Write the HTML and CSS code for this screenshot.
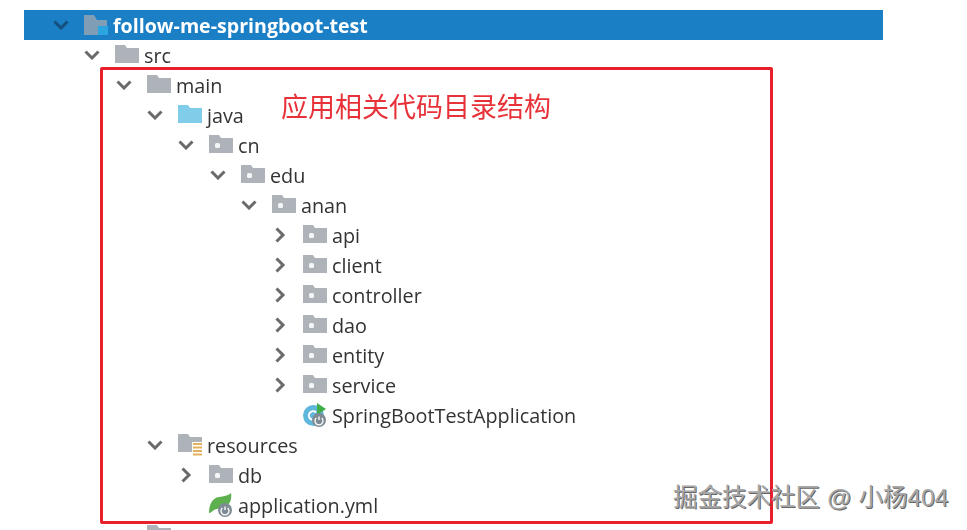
FILE: index.html
```html
<!DOCTYPE html>
<html lang="en">
<head>
    <meta charset="UTF-8">
    <meta name="viewport" content="width=device-width, initial-scale=1.0">
    <title>follow-me-springboot-test</title>
    <link rel="stylesheet" href="styles.css">
</head>
<body>
    <svg class="defs" width="0" height="0">
        <symbol id="down" viewBox="0 0 16 10"><path d="M1.5 1.5 8 8l6.5-6.5" fill="none" stroke-width="3"/></symbol>
        <symbol id="right" viewBox="0 0 12 16"><path d="M2.5 1.5 9 8l-6.5 6.5" fill="none" stroke-width="3"/></symbol>
        <symbol id="folder" viewBox="0 0 24 18"><path d="M0 0h10l2 3h12v15H0z"/></symbol>
        <symbol id="package" viewBox="0 0 24 18"><path d="M0 0h10l2 3h12v15H0z"/><rect x="6" y="8" width="5" height="5" rx="1.5" fill="#f4f5f6"/></symbol>
    </svg>

    <div class="tree">
        <div class="row root">
            <svg class="arrow down"><use href="#down"/></svg>
            <svg class="icon root-icon" viewBox="0 0 24 20"><path d="M0 0h10l3 5h10v15H0z"/><rect x="14" y="11" width="10" height="9" fill="#2aa5e0"/></svg>
            <span>follow-me-springboot-test</span>
        </div>
        <div class="row l1"><svg class="arrow down"><use href="#down"/></svg><svg class="icon"><use href="#folder"/></svg><span>src</span></div>
        <div class="row l2"><svg class="arrow down"><use href="#down"/></svg><svg class="icon"><use href="#folder"/></svg><span>main</span></div>
        <div class="row l3"><svg class="arrow down"><use href="#down"/></svg><svg class="icon java"><use href="#folder"/></svg><span>java</span></div>
        <div class="row l4"><svg class="arrow down"><use href="#down"/></svg><svg class="icon"><use href="#package"/></svg><span>cn</span></div>
        <div class="row l5"><svg class="arrow down"><use href="#down"/></svg><svg class="icon"><use href="#package"/></svg><span>edu</span></div>
        <div class="row l6"><svg class="arrow down"><use href="#down"/></svg><svg class="icon"><use href="#package"/></svg><span>anan</span></div>
        <div class="row l7"><svg class="arrow right"><use href="#right"/></svg><svg class="icon"><use href="#package"/></svg><span>api</span></div>
        <div class="row l7"><svg class="arrow right"><use href="#right"/></svg><svg class="icon"><use href="#package"/></svg><span>client</span></div>
        <div class="row l7"><svg class="arrow right"><use href="#right"/></svg><svg class="icon"><use href="#package"/></svg><span>controller</span></div>
        <div class="row l7"><svg class="arrow right"><use href="#right"/></svg><svg class="icon"><use href="#package"/></svg><span>dao</span></div>
        <div class="row l7"><svg class="arrow right"><use href="#right"/></svg><svg class="icon"><use href="#package"/></svg><span>entity</span></div>
        <div class="row l7"><svg class="arrow right"><use href="#right"/></svg><svg class="icon"><use href="#package"/></svg><span>service</span></div>
        <div class="row l7">
            <span class="arrow"></span>
            <svg class="icon app" viewBox="0 0 24 24">
                <circle cx="10.5" cy="12.5" r="10.5" fill="#5fb7dc"/>
                <path d="M13 9.5a4.2 4.2 0 1 0 0 6" fill="none" stroke="#fff" stroke-width="2"/>
                <path d="M14 0l9 6-9 6z" fill="#3fae49"/>
                <circle cx="16" cy="17" r="7" fill="#7f8b94"/>
                <path d="M16 13.5v3.5M13.3 15a4 4 0 1 0 5.4 0" fill="none" stroke="#fff" stroke-width="1.3"/>
            </svg>
            <span>SpringBootTestApplication</span>
        </div>
        <div class="row l3">
            <svg class="arrow down"><use href="#down"/></svg>
            <svg class="icon res" viewBox="0 0 24 22">
                <path d="M0 0h10l2 3h12v15H0z" fill="#aeb3ba"/>
                <rect x="14" y="8" width="10" height="14" fill="#fff"/>
                <path d="M15 10h9M15 13.5h9M15 17h9M15 20.5h9" stroke="#e3b15c" stroke-width="2"/>
            </svg>
            <span>resources</span>
        </div>
        <div class="row l4"><svg class="arrow right"><use href="#right"/></svg><svg class="icon"><use href="#package"/></svg><span>db</span></div>
        <div class="row l4">
            <span class="arrow"></span>
            <svg class="icon app" viewBox="0 0 24 24">
                <path d="M0 20C0 12 3 5 10 4c5-1 9-1 12-4 1 6-1 12-6 14-4 2-8 1-11 3-2 1-3 3-5 3z" fill="#5cb04e"/>
                <circle cx="16" cy="17" r="7" fill="#7f8b94"/>
                <path d="M16 13.5v3.5M13.3 15a4 4 0 1 0 5.4 0" fill="none" stroke="#fff" stroke-width="1.3"/>
            </svg>
            <span>application.yml</span>
        </div>
        <div class="row l2"><span class="arrow"></span><svg class="icon"><use href="#folder"/></svg></div>
    </div>

    <div class="red-box"></div>
    <div class="note">应用相关代码目录结构</div>
    <div class="watermark">掘金技术社区 @ 小杨404</div>
</body>
</html>
```

FILE: styles.css
```css
html, body {
    height: 530px;
    overflow: hidden;
}
body {
    margin: 0;
    background: #fff;
    font-family: "Open Sans", "Noto Sans", sans-serif;
    color: #333;
}
.defs {
    display: block;
    height: 0;
}
.tree {
    width: 859px;
    margin: 10px 0 0 24px;
    filter: blur(0.4px);
}
.row {
    display: flex;
    align-items: center;
    height: 30px;
    font-size: 19.8px;
    line-height: 30px;
    white-space: nowrap;
}
.row span:last-child {
    padding-top: 2px;
}
.root {
    padding-left: 25px;
    background: #1b7fc6;
    color: #fff;
    font-weight: 700;
    font-size: 19.6px;
}
.l1 { padding-left: 56px; }
.l2 { padding-left: 88px; }
.l3 { padding-left: 119px; }
.l4 { padding-left: 150px; }
.l5 { padding-left: 182px; }
.l6 { padding-left: 213px; }
.l7 { padding-left: 244px; }
.arrow {
    flex: none;
    width: 24px;
    margin-right: 11px;
    stroke: #6a6a6a;
}
.arrow.down { height: 10px; }
.arrow.right { height: 16px; }
.root .arrow { stroke: #14507f; }
.icon {
    flex: none;
    width: 24px;
    height: 18px;
    margin-right: 5px;
    margin-top: -3px;
    fill: #aeb3ba;
}
.java { fill: #7fcde9; }
.root-icon {
    height: 20px;
    margin-top: 0;
    fill: #7f9db5;
}
.app {
    height: 24px;
    margin-top: 0;
}
.res {
    height: 22px;
    margin-top: 0;
}
.red-box {
    position: absolute;
    left: 100px;
    top: 67px;
    width: 667px;
    height: 451px;
    border: 3px solid #e8202e;
    border-radius: 2px;
    filter: blur(0.4px);
}
.note {
    position: absolute;
    left: 281px;
    top: 87px;
    font-family: "Noto Sans CJK SC", sans-serif;
    font-size: 27px;
    line-height: 38px;
    color: #e8323a;
    filter: blur(0.3px);
}
.watermark {
    position: absolute;
    left: 673px;
    top: 481px;
    font-family: "Liberation Sans", "Noto Sans CJK SC", sans-serif;
    font-size: 24.5px;
    line-height: 34px;
    white-space: nowrap;
    color: #a8a8a8;
    text-shadow: 1px 1px 0 #666;
}
```
